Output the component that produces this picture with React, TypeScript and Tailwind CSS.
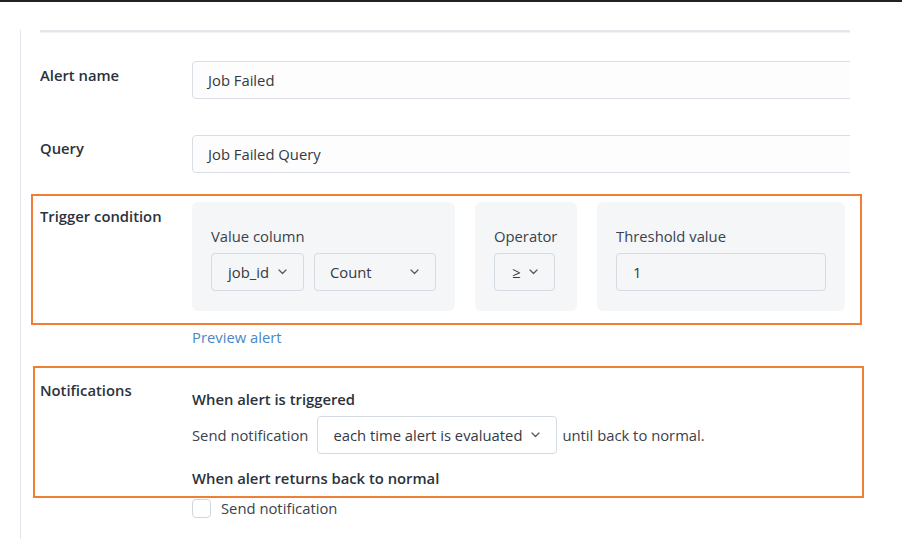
import React from "react";

function Chevron() {
  return (
    <svg width="9" height="6" viewBox="0 0 9 6" fill="none" className="shrink-0">
      <polyline points="1,1 4.5,4.5 8,1" stroke="#555b63" strokeWidth="1.3" strokeLinecap="round" strokeLinejoin="round" />
    </svg>
  );
}

function Select({ value, className }: { value: string; className: string }) {
  return (
    <div
      className={
        "h-[38px] flex items-center justify-between rounded-[4px] border border-[#d5dbe3] pr-4 text-[#333a44] " +
        className
      }
    >
      <span>{value}</span>
      <Chevron />
    </div>
  );
}

export default function App() {
  return (
    <div className="relative h-[539px] w-[902px] overflow-hidden bg-white font-['Open_Sans',sans-serif] text-[14.8px] text-[#2b323c]">
      {/* top bar */}
      <div className="h-[2px] bg-[#222]" />

      <div className="ml-5 mt-[28px] h-[520px] border-l border-[#e2e6ec] pl-[19px]">
        <div className="w-[810px]">
          {/* card top edge */}
          <div className="mt-[2px] h-[2px] bg-[#e3e7ec] shadow-[0_1px_1px_#f0f2f5]" />

          {/* Alert name */}
          <div className="mt-[29px] flex">
            <div className="w-[152px] pt-1 font-semibold leading-5">Alert name</div>
            <div className="flex-1 overflow-hidden">
              <div className="h-[38px] w-[720px] rounded-[4px] border border-[#d9dee5] bg-[#fdfdfd] pl-[15px] leading-[36px] text-[#333a44]">
                Job Failed
              </div>
            </div>
          </div>

          {/* Query */}
          <div className="mt-[36px] flex">
            <div className="w-[152px] pt-[3px] font-semibold leading-5">Query</div>
            <div className="flex-1 overflow-hidden">
              <div className="h-[38px] w-[720px] rounded-[4px] border border-[#d9dee5] bg-[#fdfdfd] pl-[15px] leading-[36px] text-[#333a44]">
                Job Failed Query
              </div>
            </div>
          </div>

          {/* Trigger condition */}
          <div className="relative mt-[29px] flex">
            <div className="pointer-events-none absolute -left-[9px] -right-[12px] -top-[8px] -bottom-[14px] border-2 border-[#ef7f35]" />
            <div className="w-[152px] pt-1 font-semibold leading-5">Trigger condition</div>
            <div className="flex gap-5">
              <div className="h-[109px] w-[263px] rounded-[6px] bg-[#f4f6f8] px-[19px] pt-6">
                <div className="mb-[7px] leading-5 text-[#3a424d]">Value column</div>
                <div className="flex gap-[10px]">
                  <Select value="job_id" className="w-[93px] pl-4" />
                  <Select value="Count" className="w-[122px] pl-[15px]" />
                </div>
              </div>
              <div className="h-[109px] w-[102px] rounded-[6px] bg-[#f4f6f8] pl-[19px] pt-6">
                <div className="mb-[7px] leading-5 text-[#3a424d]">Operator</div>
                <Select value="≥" className="w-[61px] pl-[17px]" />
              </div>
              <div className="h-[109px] w-[248px] rounded-[6px] bg-[#f4f6f8] px-[19px] pt-6">
                <div className="mb-[7px] leading-5 text-[#3a424d]">Threshold value</div>
                <div className="h-[38px] w-[210px] rounded-[4px] border border-[#d5dbe3] pl-4 leading-[36px] text-[#333a44]">
                  1
                </div>
              </div>
            </div>
          </div>

          <div className="ml-[152px] mt-4 leading-5 text-[#4a87c6]">Preview alert</div>

          {/* Notifications */}
          <div className="relative mt-[33px] flex">
            <div className="pointer-events-none absolute -left-[7px] -right-[14px] -top-[14px] -bottom-[10px] border-2 border-[#ef7f35]" />
            <div className="w-[152px] font-semibold leading-5">Notifications</div>
            <div className="pt-[9px]">
              <div className="font-semibold leading-5">When alert is triggered</div>
              <div className="mt-[7px] flex items-center text-[#3a424d]">
                <span className="mr-[9px]">Send notification</span>
                <Select value="each time alert is evaluated" className="w-[240px] bg-white pl-[15px]" />
                <span className="ml-[5px]">until back to normal.</span>
              </div>
              <div className="mt-[14px] font-semibold leading-5">When alert returns back to normal</div>
            </div>
          </div>
          <div className="ml-[152px] mt-[10px] flex items-center gap-[10px] text-[#3a424d]">
            <div className="h-[19px] w-[19px] rounded-[4px] border border-[#d0d6de] bg-white" />
            <span className="leading-5">Send notification</span>
          </div>
        </div>
      </div>
    </div>
  );
}
